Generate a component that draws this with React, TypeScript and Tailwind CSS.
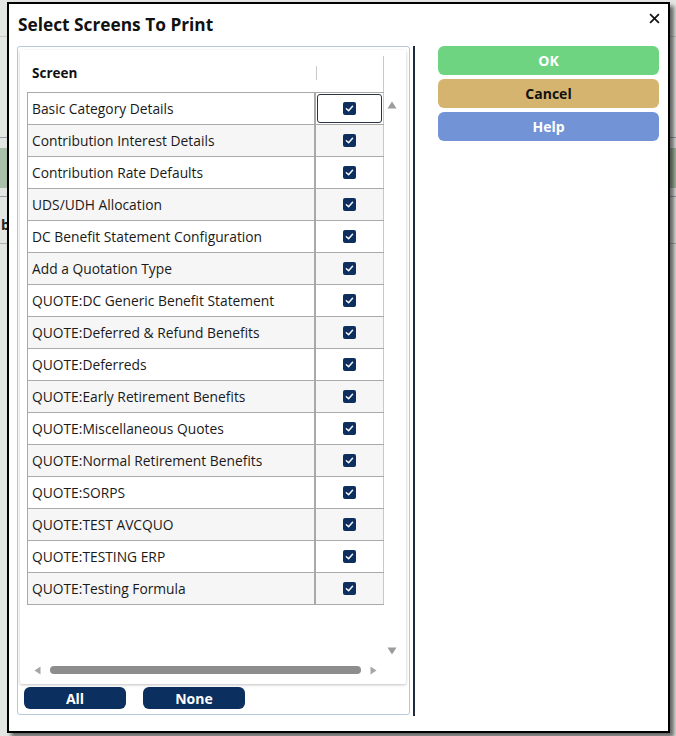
import React from "react";

const rows = [
  "Basic Category Details",
  "Contribution Interest Details",
  "Contribution Rate Defaults",
  "UDS/UDH Allocation",
  "DC Benefit Statement Configuration",
  "Add a Quotation Type",
  "QUOTE:DC Generic Benefit Statement",
  "QUOTE:Deferred & Refund Benefits",
  "QUOTE:Deferreds",
  "QUOTE:Early Retirement Benefits",
  "QUOTE:Miscellaneous Quotes",
  "QUOTE:Normal Retirement Benefits",
  "QUOTE:SORPS",
  "QUOTE:TEST AVCQUO",
  "QUOTE:TESTING ERP",
  "QUOTE:Testing Formula",
];

function Check() {
  return (
    <span className="flex h-[13px] w-[13px] items-center justify-center rounded-[2px] bg-[#0c2f5f]">
      <svg width="9" height="9" viewBox="0 0 10 10" fill="none">
        <path d="M1.6 5.2 L4 7.4 L8.4 2.6" stroke="white" strokeWidth="1.6" strokeLinecap="round" strokeLinejoin="round" />
      </svg>
    </span>
  );
}

export default function App() {
  return (
    <div
      className="relative h-[736px] w-[676px] overflow-hidden bg-[#e4e6e4]"
      style={{ fontFamily: '"Open Sans", "Noto Sans", sans-serif' }}
    >
      {/* background page hints */}
      <div className="absolute left-0 top-[36px] h-px w-full bg-[#c8c8c8]" />
      <div className="absolute left-0 top-[137px] h-px w-full bg-[#9aa0a8]" />
      <div className="absolute left-0 top-[148px] h-[40px] w-full bg-[#a9bfa9]" />
      <div className="absolute left-0 top-[196px] h-px w-full bg-[#9aa0a8]" />
      <div className="absolute left-0 top-[243px] h-px w-full bg-[#b0b0b0]" />
      <div className="absolute left-[1px] top-[214px] text-[14px] font-bold text-[#222]">b</div>

      {/* dialog */}
      <div className="absolute left-[7px] top-[2px] flex h-[731px] w-[663px] flex-col border-2 border-black bg-white shadow-[4px_4px_4px_rgba(0,0,0,0.55)]">
        <div className="relative flex h-[42px] items-center pl-[9px]">
          <span className="text-[17.3px] font-bold text-[#111]">Select Screens To Print</span>
          <span className="absolute right-[8px] top-[9px] text-[#111]">
            <svg width="11" height="11" viewBox="0 0 10 10">
              <path d="M1 1 L9 9 M9 1 L1 9" stroke="#111" strokeWidth="1.5" />
            </svg>
          </span>
        </div>

        <div className="flex">
          {/* left panel */}
          <div className="ml-[8px] flex h-[669px] w-[393px] flex-col rounded-[3px] border border-[#b7c7da] pl-[2px] pt-[3px]">
            <div className="flex h-[634px] w-[386px] flex-col rounded-[2px] bg-white shadow-[0_1px_3px_rgba(0,0,0,0.25)]">
              <div className="flex flex-1 pl-[7px] pt-[6px]">
                {/* grid */}
                <div className="flex w-[357px] flex-col">
                  <div className="flex h-[36px] border-r border-[#c9c9c9]">
                    <div className="flex w-[289px] items-center pb-[2px] pl-[5px] text-[13.5px] font-bold text-[#111]">
                      Screen
                    </div>
                    <div className="mt-[10px] h-[14px] w-px bg-[#c8c8c8]" />
                  </div>
                  <div className="border-l border-t border-[#a9a9a9]">
                    {rows.map((r, i) => (
                      <div
                        key={r}
                        className={`flex h-[32px] border-b border-[#a9a9a9] ${i % 2 === 1 ? "bg-[#f6f6f6]" : "bg-white"}`}
                      >
                        <div className="flex w-[288px] items-center border-r-2 border-[#a9a9a9] pl-[4px] pt-[2px] text-[13.8px] text-[#1a1a1a]">
                          {r}
                        </div>
                        <div className="flex flex-1 items-center justify-center border-r border-[#c9c9c9] p-[1px]">
                          {i === 0 ? (
                            <div className="flex h-full w-full items-center justify-center rounded-[3px] border border-[#2b3442]">
                              <Check />
                            </div>
                          ) : (
                            <Check />
                          )}
                        </div>
                      </div>
                    ))}
                  </div>
                </div>
                {/* vertical scrollbar */}
                <div className="flex w-[16px] flex-col items-center justify-between pb-[6px] pt-[45px]">
                  <svg width="10" height="8" viewBox="0 0 10 8">
                    <path d="M5 0.5 L9.5 7.5 L0.5 7.5 Z" fill="#9c9c9c" />
                  </svg>
                  <svg width="10" height="8" viewBox="0 0 10 8">
                    <path d="M0.5 0.5 L9.5 0.5 L5 7.5 Z" fill="#9c9c9c" />
                  </svg>
                </div>
              </div>
              {/* horizontal scrollbar */}
              <div className="mb-[5px] flex h-[18px] items-center pl-[14px]">
                <svg width="7" height="9" viewBox="0 0 7 9">
                  <path d="M6.5 0.5 L6.5 8.5 L0.5 4.5 Z" fill="#a6a6a6" />
                </svg>
                <div className="ml-[9px] h-[8px] w-[311px] rounded-full bg-[#8d8d8d]" />
                <svg className="ml-[9px]" width="7" height="9" viewBox="0 0 7 9">
                  <path d="M0.5 0.5 L0.5 8.5 L6.5 4.5 Z" fill="#a6a6a6" />
                </svg>
              </div>
            </div>
            <div className="mt-[3px] flex gap-[17px] pl-[4px]">
              <button className="flex h-[22px] w-[102px] items-center justify-center rounded-[6px] bg-[#0b2f5f] text-[14px] font-bold text-white">
                All
              </button>
              <button className="flex h-[22px] w-[102px] items-center justify-center rounded-[6px] bg-[#0b2f5f] text-[14px] font-bold text-white">
                None
              </button>
            </div>
          </div>

          {/* separator */}
          <div className="ml-[3px] h-[670px] w-[2px] bg-[#1e2b3e]" />

          {/* right buttons */}
          <div className="ml-[23px] flex w-[221px] flex-col gap-[4px]">
            <button className="flex h-[29px] items-center justify-center rounded-[6px] bg-[#6fd482] text-[14px] font-bold text-white">
              OK
            </button>
            <button className="flex h-[29px] items-center justify-center rounded-[6px] bg-[#d5b470] text-[14px] font-bold text-[#111]">
              Cancel
            </button>
            <button className="flex h-[29px] items-center justify-center rounded-[6px] bg-[#7293d6] text-[14px] font-bold text-white">
              Help
            </button>
          </div>
        </div>
      </div>
    </div>
  );
}
